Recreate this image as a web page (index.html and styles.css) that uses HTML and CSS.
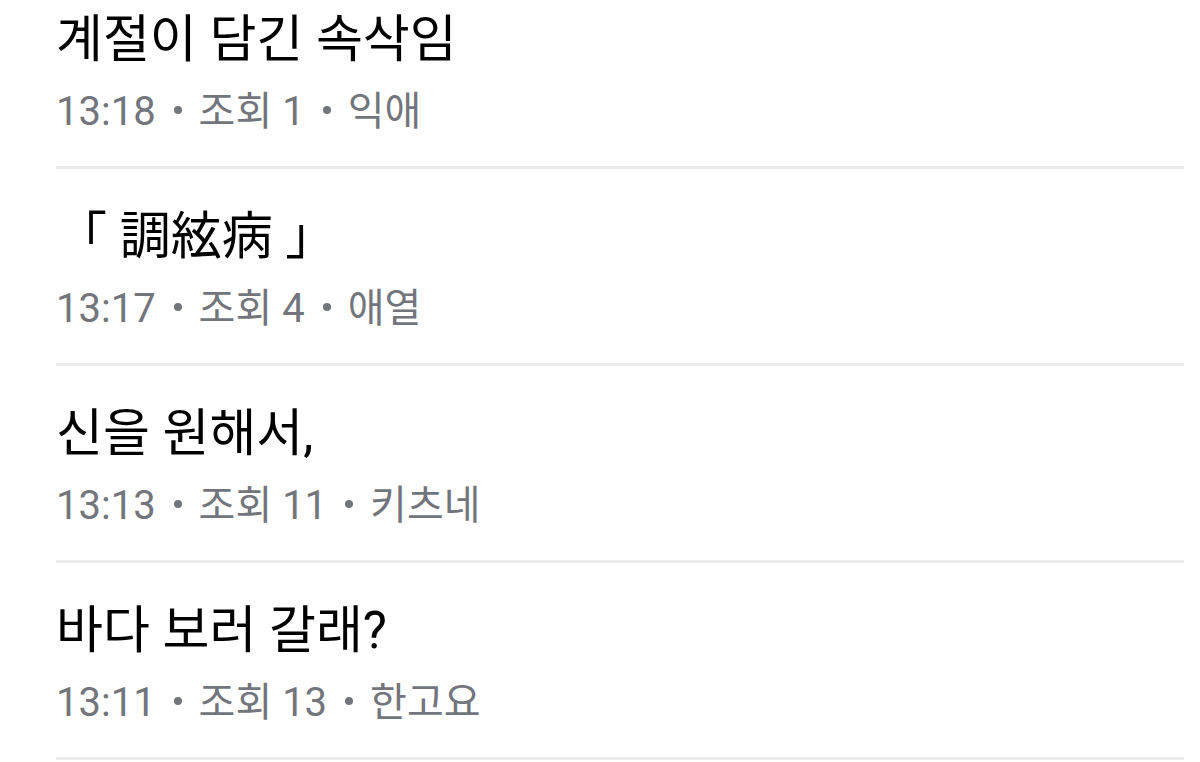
FILE: index.html
```html
<!DOCTYPE html>
<html lang="ko">
<head>
  <meta charset="UTF-8" />
  <meta name="viewport" content="width=device-width, initial-scale=1.0" />
  <title>게시글 목록</title>
  <link rel="stylesheet" href="styles.css">
</head>
<body>
  <div id="list">
    <div class="post">
      <div class="post-title">계절이 담긴 속삭임</div>
      <div class="post-meta">13:18<span class="dot"></span>조회 1<span class="dot"></span>익애</div>
    </div>
    <div class="post">
      <div class="post-title">「 調絃病 」</div>
      <div class="post-meta">13:17<span class="dot"></span>조회 4<span class="dot"></span>애열</div>
    </div>
    <div class="post">
      <div class="post-title">신을 원해서,</div>
      <div class="post-meta">13:13<span class="dot"></span>조회 11<span class="dot"></span>키츠네</div>
    </div>
    <div class="post">
      <div class="post-title">바다 보러 갈래?</div>
      <div class="post-meta">13:11<span class="dot"></span>조회 13<span class="dot"></span>한고요</div>
    </div>
  </div>
</body>
</html>
```

FILE: styles.css
```css
html, body {
  margin: 0;
  padding: 0;
  overflow: hidden;
  background: #fff;
  font-family: 'Roboto', 'Noto Sans CJK KR', sans-serif;
}
#list {
  margin-top: -28px;
  padding: 0 16px 0 56px;
}
.post {
  padding: 34px 0 26px;
  border-bottom: 3px solid #ebebeb;
}
.post-title {
  color: #000;
  font-size: 51px;
  line-height: 68px;
}
.post-meta {
  color: #72767c;
  font-size: 40px;
  line-height: 56px;
  margin-top: 10px;
}
.dot {
  display: inline-block;
  width: 8px;
  height: 8px;
  border-radius: 50%;
  background: #72767c;
  margin: 0 17px 0 18px;
  vertical-align: 0.28em;
}
```
